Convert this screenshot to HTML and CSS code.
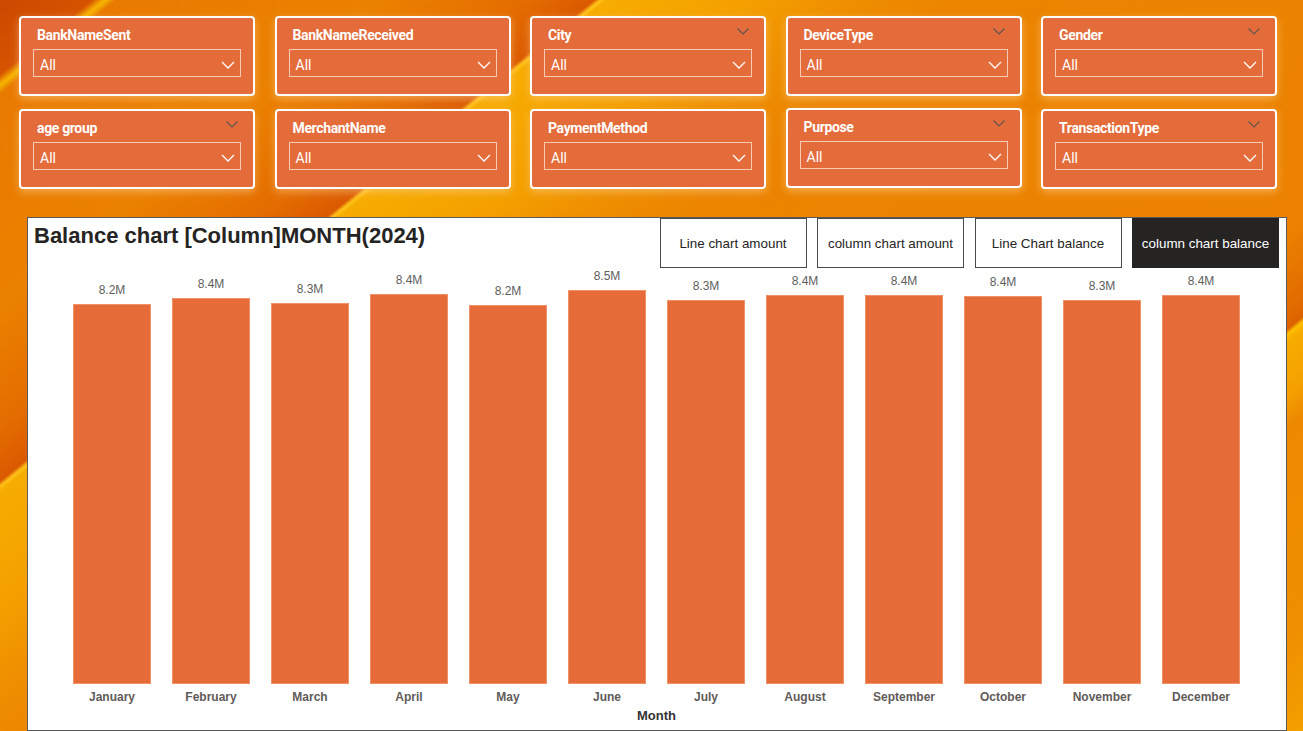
FILE: index.html
```html
<!DOCTYPE html>
<html lang="en">
<head>
<meta charset="utf-8">
<title>Balance chart</title>
<link rel="stylesheet" href="styles.css">
</head>
<body>
<main class="page">
  <section class="filters">
    <div class="slicer">
      <div class="slicer-head"><span class="slicer-title">BankNameSent</span></div>
      <div class="dropdown"><span>All</span><svg class="chev" width="14" height="8" viewBox="0 0 14 8"><path d="M1 1l6 6 6-6"/></svg></div>
    </div>
    <div class="slicer">
      <div class="slicer-head"><span class="slicer-title">BankNameReceived</span></div>
      <div class="dropdown"><span>All</span><svg class="chev" width="14" height="8" viewBox="0 0 14 8"><path d="M1 1l6 6 6-6"/></svg></div>
    </div>
    <div class="slicer">
      <div class="slicer-head"><span class="slicer-title">City</span><svg class="mini" width="12" height="7" viewBox="0 0 12 7"><path d="M0.5 0.5l5.5 5.5 5.5-5.5"/></svg></div>
      <div class="dropdown"><span>All</span><svg class="chev" width="14" height="8" viewBox="0 0 14 8"><path d="M1 1l6 6 6-6"/></svg></div>
    </div>
    <div class="slicer">
      <div class="slicer-head"><span class="slicer-title">DeviceType</span><svg class="mini" width="12" height="7" viewBox="0 0 12 7"><path d="M0.5 0.5l5.5 5.5 5.5-5.5"/></svg></div>
      <div class="dropdown"><span>All</span><svg class="chev" width="14" height="8" viewBox="0 0 14 8"><path d="M1 1l6 6 6-6"/></svg></div>
    </div>
    <div class="slicer">
      <div class="slicer-head"><span class="slicer-title">Gender</span><svg class="mini" width="12" height="7" viewBox="0 0 12 7"><path d="M0.5 0.5l5.5 5.5 5.5-5.5"/></svg></div>
      <div class="dropdown"><span>All</span><svg class="chev" width="14" height="8" viewBox="0 0 14 8"><path d="M1 1l6 6 6-6"/></svg></div>
    </div>
    <div class="slicer">
      <div class="slicer-head"><span class="slicer-title">age group</span><svg class="mini" width="12" height="7" viewBox="0 0 12 7"><path d="M0.5 0.5l5.5 5.5 5.5-5.5"/></svg></div>
      <div class="dropdown"><span>All</span><svg class="chev" width="14" height="8" viewBox="0 0 14 8"><path d="M1 1l6 6 6-6"/></svg></div>
    </div>
    <div class="slicer">
      <div class="slicer-head"><span class="slicer-title">MerchantName</span></div>
      <div class="dropdown"><span>All</span><svg class="chev" width="14" height="8" viewBox="0 0 14 8"><path d="M1 1l6 6 6-6"/></svg></div>
    </div>
    <div class="slicer">
      <div class="slicer-head"><span class="slicer-title">PaymentMethod</span></div>
      <div class="dropdown"><span>All</span><svg class="chev" width="14" height="8" viewBox="0 0 14 8"><path d="M1 1l6 6 6-6"/></svg></div>
    </div>
    <div class="slicer slicer-up">
      <div class="slicer-head"><span class="slicer-title">Purpose</span><svg class="mini" width="12" height="7" viewBox="0 0 12 7"><path d="M0.5 0.5l5.5 5.5 5.5-5.5"/></svg></div>
      <div class="dropdown"><span>All</span><svg class="chev" width="14" height="8" viewBox="0 0 14 8"><path d="M1 1l6 6 6-6"/></svg></div>
    </div>
    <div class="slicer">
      <div class="slicer-head"><span class="slicer-title">TransactionType</span><svg class="mini" width="12" height="7" viewBox="0 0 12 7"><path d="M0.5 0.5l5.5 5.5 5.5-5.5"/></svg></div>
      <div class="dropdown"><span>All</span><svg class="chev" width="14" height="8" viewBox="0 0 14 8"><path d="M1 1l6 6 6-6"/></svg></div>
    </div>
  </section>

  <section class="chart">
    <div class="chart-head">
      <h1 class="chart-title">Balance chart [Column]MONTH(2024)</h1>
      <div class="toggles">
        <button class="toggle">Line chart amount</button>
        <button class="toggle">column chart amount</button>
        <button class="toggle">Line Chart balance</button>
        <button class="toggle active">column chart balance</button>
      </div>
    </div>
    <div class="plot">
      <div class="col"><span class="val">8.2M</span><div class="bar" style="height:380px"></div></div>
      <div class="col"><span class="val">8.4M</span><div class="bar" style="height:386px"></div></div>
      <div class="col"><span class="val">8.3M</span><div class="bar" style="height:381px"></div></div>
      <div class="col"><span class="val">8.4M</span><div class="bar" style="height:390px"></div></div>
      <div class="col"><span class="val">8.2M</span><div class="bar" style="height:379px"></div></div>
      <div class="col"><span class="val">8.5M</span><div class="bar" style="height:394px"></div></div>
      <div class="col"><span class="val">8.3M</span><div class="bar" style="height:384px"></div></div>
      <div class="col"><span class="val">8.4M</span><div class="bar" style="height:389px"></div></div>
      <div class="col"><span class="val">8.4M</span><div class="bar" style="height:389px"></div></div>
      <div class="col"><span class="val">8.4M</span><div class="bar" style="height:388px"></div></div>
      <div class="col"><span class="val">8.3M</span><div class="bar" style="height:384px"></div></div>
      <div class="col"><span class="val">8.4M</span><div class="bar" style="height:389px"></div></div>
    </div>
    <div class="axis">
      <span>January</span><span>February</span><span>March</span><span>April</span>
      <span>May</span><span>June</span><span>July</span><span>August</span>
      <span>September</span><span>October</span><span>November</span><span>December</span>
    </div>
    <div class="axis-title">Month</div>
  </section>
</main>
</body>
</html>
```

FILE: styles.css
```css
* { box-sizing: border-box; }

html, body {
  margin: 0;
  padding: 0;
}

body {
  width: 1303px;
  height: 731px;
  overflow: hidden;
  font-family: "Liberation Sans", Arial, sans-serif;
  background:
    linear-gradient(141deg,
      #cc4800 0px,
      #d65300 58px,
      #f8b400 66px,
      #f0a000 69px,
      #e97a00 73px,
      #eb8100 240px,
      #e46d00 330px,
      #db5a00 374px,
      #ffc21a 378px,
      #f7ac00 382px,
      #f4a000 470px,
      #ef9000 530px,
      #ec8400 600px,
      #ec8200 990px,
      #e26c00 1050px,
      #dd6200 1066px,
      #ffc000 1070px,
      #f7ac00 1075px,
      #f4a000 1118px,
      #ee8a00 1140px,
      #ef8e00 1300px,
      #f3a000 1388px);
}

.page {
  padding: 16px 0 0 19px;
}

/* ---------- slicers ---------- */
.filters {
  display: grid;
  grid-template-columns: repeat(5, 236px);
  column-gap: 19.5px;
  row-gap: 13px;
}

.slicer {
  height: 80px;
  background: #e46b3a;
  border: 2px solid #ffffff;
  border-radius: 4px;
  padding: 9px 12px 0 12px;
  box-shadow: 0 3px 9px 0 rgba(255, 214, 160, 0.5);
}

.slicer-up {
  transform: translateY(-1px);
}

.slicer-head {
  display: flex;
  justify-content: space-between;
  align-items: flex-start;
  height: 16px;
  padding-left: 4px;
  padding-right: 3px;
  margin-bottom: 6px;
}

.slicer-title {
  font-family: Roboto, "Liberation Sans", sans-serif;
  font-weight: 700;
  font-size: 14px;
  line-height: 16px;
  letter-spacing: -0.35px;
  color: #ffffff;
}

.mini {
  margin-top: 1px;
}

.mini path {
  fill: none;
  stroke: #5e5650;
  stroke-width: 1.1;
}

.dropdown {
  height: 28px;
  border: 1px solid rgba(255, 235, 225, 0.75);
  display: flex;
  align-items: center;
  justify-content: space-between;
  padding: 4px 5px 0 6px;
  font-family: Roboto, "Liberation Sans", sans-serif;
  font-size: 14px;
  color: #ffffff;
}

.chev path {
  fill: none;
  stroke: #ffffff;
  stroke-width: 1.3;
}

/* ---------- chart ---------- */
.chart {
  margin-top: 28px;
  margin-left: 8px;
  width: 1260px;
  height: 514px;
  background: #ffffff;
  border: 1px solid #5a5a5a;
}

.chart-head {
  display: flex;
  justify-content: space-between;
  align-items: flex-start;
  height: 50px;
}

.chart-title {
  margin: 0;
  padding: 5px 0 0 6px;
  font-family: "Liberation Sans", Arial, sans-serif;
  font-weight: 700;
  font-size: 22px;
  line-height: 26px;
  color: #252423;
}

.toggles {
  display: flex;
  gap: 10.5px;
  margin-right: 7px;
}

.toggle {
  width: 147px;
  height: 50px;
  margin: 0;
  padding: 0;
  background: #ffffff;
  border: 1px solid #4a4a4a;
  font-family: "Liberation Sans", Arial, sans-serif;
  font-size: 13.4px;
  color: #252423;
}

.toggle.active {
  background: #252423;
  border-color: #252423;
  color: #ffffff;
}

.plot {
  display: flex;
  align-items: flex-end;
  height: 416px;
  padding-left: 34.5px;
}

.col {
  width: 99px;
  display: flex;
  flex-direction: column;
  align-items: center;
}

.val {
  font-size: 12px;
  line-height: 14px;
  color: #605e5c;
  margin-bottom: 7px;
}

.bar {
  width: 78px;
  background: #e56c39;
  box-shadow: inset 0 0 0 1px rgba(255, 180, 150, 0.5);
}

.axis {
  display: flex;
  padding-left: 34.5px;
  padding-top: 6px;
}

.axis span {
  width: 99px;
  text-align: center;
  font-size: 12px;
  line-height: 14px;
  font-weight: 700;
  color: #5f5b58;
}

.axis-title {
  width: 1188px;
  margin-left: 34.5px;
  margin-top: 5px;
  text-align: center;
  font-size: 13px;
  line-height: 14px;
  font-weight: 700;
  color: #333333;
}
```
